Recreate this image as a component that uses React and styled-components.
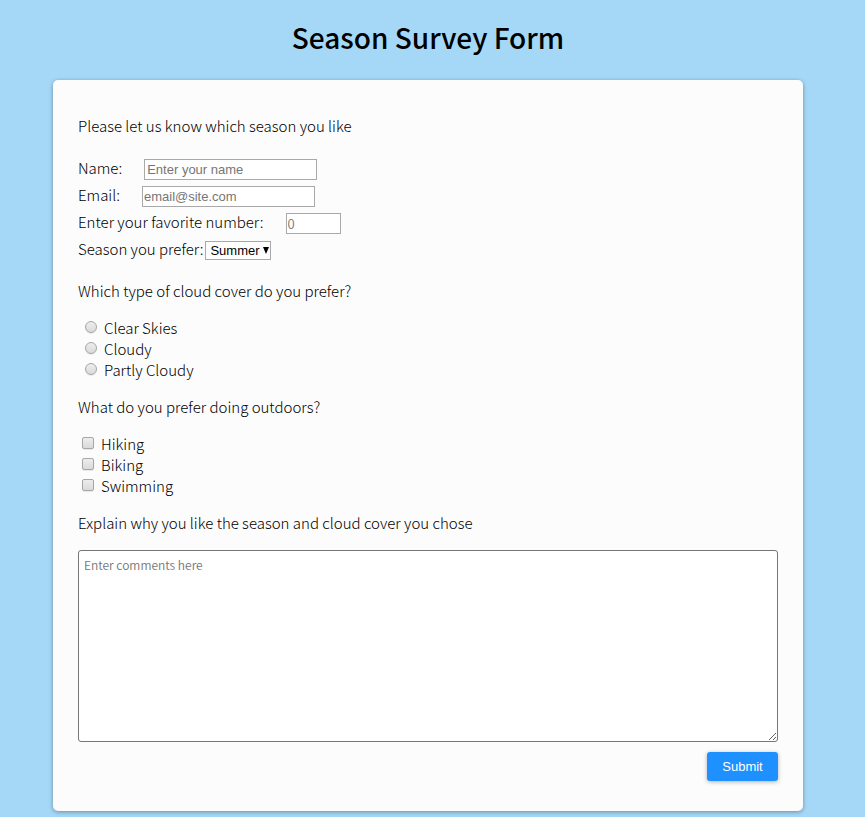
import React from "react";
import styled, { createGlobalStyle } from "styled-components";

const GlobalStyle = createGlobalStyle`
  *, *::before, *::after { box-sizing: border-box; }
  body {
    margin: 0;
    background: #a5d8f7;
    color: #000;
    font-family: "Noto Sans CJK SC", sans-serif;
    font-size: 15px;
    font-weight: 300;
    line-height: 21px;
  }
`;

const Page = styled.main`
  padding: 13px 62px 6px 53px;
`;

const Title = styled.h1`
  margin: 0 0 19px;
  font-size: 28px;
  font-weight: 500;
  line-height: 48px;
  text-align: center;
`;

const Card = styled.form`
  max-width: 750px;
  margin: 0 auto;
  padding: 35px 25px 30px;
  background: #fcfcfc;
  border-radius: 5px;
  box-shadow: 0 1px 4px rgba(0, 0, 0, 0.35);
`;

const Intro = styled.p`
  margin: 0 0 20px;
`;

const Row = styled.div`
  display: flex;
  align-items: center;
  gap: ${({ $tight }) => ($tight ? 2 : 22)}px;
  height: 27px;
`;

const RowLabel = styled.label`
  padding-bottom: 4px;
`;

const Field = styled.input`
  width: ${({ $short }) => ($short ? 55 : 173)}px;
  height: 21px;
  padding: ${({ $inset }) => ($inset ? "1px 2px" : "1px")};
  border: 1px solid #a9a9a9;
  border-radius: 0;
  background: #fff;
  color: #000;
  font: ${({ $short }) =>
    $short
      ? '350 13px/17px "Noto Sans CJK SC", sans-serif'
      : '13px/17px "Liberation Sans", Arial, sans-serif'};
  &::placeholder { color: #757575; opacity: 1; }
`;

const SelectBox = styled.span`
  display: inline-grid;
  align-items: center;
  > * { grid-area: 1 / 1; }
`;

const Select = styled.select`
  appearance: none;
  width: 66px;
  height: 19px;
  padding: 0 10px 0 4px;
  border: 1px solid #a9a9a9;
  border-radius: 0;
  background: #fff;
  color: #000;
  font: 13px/17px "Liberation Sans", Arial, sans-serif;
`;

const Arrow = styled.svg`
  justify-self: end;
  margin-right: 2px;
  pointer-events: none;
`;

const Group = styled.fieldset`
  min-width: 0;
  margin: 16px 0 0;
  padding: 0;
  border: 0;
`;

const Question = styled.legend`
  padding: 0;
  margin-bottom: 16px;
`;

const Option = styled.label`
  display: flex;
  align-items: center;
  gap: 7px;
  padding-left: ${({ $indent }) => $indent}px;
`;

const Tick = styled.input`
  appearance: none;
  flex: none;
  width: 12px;
  height: 12px;
  margin: 0 0 2px;
  border: 1px solid #a6a6a6;
  border-radius: ${({ type }) => (type === "radio" ? "50%" : "2px")};
  background: linear-gradient(#ededed, #dadada);
  box-shadow: 0 1px 1px rgba(0, 0, 0, 0.08);
  &:checked {
    background: ${({ type }) =>
      type === "radio" ? "radial-gradient(#555 0 3px, #e4e4e4 4px)" : "#666"};
  }
`;

const Prompt = styled.label`
  display: block;
  margin: 16px 0 17px;
`;

const Comments = styled.textarea`
  display: block;
  width: 100%;
  height: 192px;
  padding: 4px 5px;
  border: 1px solid #767676;
  border-radius: 3px;
  background: #fff;
  color: #000;
  font: 350 12px/19px "Noto Sans CJK SC", sans-serif;
  &::placeholder { color: #757575; opacity: 1; }
`;

const Actions = styled.div`
  display: flex;
  justify-content: flex-end;
  margin-top: 10px;
`;

const Submit = styled.button`
  min-width: 71px;
  height: 29px;
  padding: 0 14px;
  border: 0;
  border-radius: 3px;
  background: #1e90ff;
  color: #fff;
  box-shadow: 0 1px 4px rgba(0, 0, 0, 0.3);
  font: 13px "Liberation Sans", Arial, sans-serif;
  cursor: pointer;
`;

function Choices({ question, type, name, options, indent }) {
  return (
    <Group>
      <Question>{question}</Question>
      {options.map((text) => (
        <Option key={text} $indent={indent}>
          <Tick type={type} name={name} value={text} />
          {text}
        </Option>
      ))}
    </Group>
  );
}

export default function App() {
  return (
    <>
      <GlobalStyle />
      <Page>
        <Title>Season Survey Form</Title>
        <Card onSubmit={(e) => e.preventDefault()}>
          <Intro>Please let us know which season you like</Intro>
          <Row>
            <RowLabel htmlFor="name">Name:</RowLabel>
            <Field id="name" type="text" placeholder="Enter your name" $inset />
          </Row>
          <Row>
            <RowLabel htmlFor="email">Email:</RowLabel>
            <Field id="email" type="email" placeholder="email@site.com" />
          </Row>
          <Row>
            <RowLabel htmlFor="number">Enter your favorite number:</RowLabel>
            <Field id="number" type="number" placeholder="0" $short />
          </Row>
          <Row $tight>
            <RowLabel htmlFor="season">Season you prefer:</RowLabel>
            <SelectBox>
              <Select id="season" defaultValue="Summer">
                <option>Summer</option>
                <option>Fall</option>
                <option>Winter</option>
                <option>Spring</option>
              </Select>
              <Arrow width="6" height="7" viewBox="0 0 6 7" aria-hidden="true">
                <path d="M0 0h6L3 7z" />
              </Arrow>
            </SelectBox>
          </Row>
          <Choices
            question="Which type of cloud cover do you prefer?"
            type="radio"
            name="cloud"
            indent={7}
            options={["Clear Skies", "Cloudy", "Partly Cloudy"]}
          />
          <Choices
            question="What do you prefer doing outdoors?"
            type="checkbox"
            name="outdoors"
            indent={4}
            options={["Hiking", "Biking", "Swimming"]}
          />
          <Prompt htmlFor="comments">
            Explain why you like the season and cloud cover you chose
          </Prompt>
          <Comments id="comments" placeholder="Enter comments here" />
          <Actions>
            <Submit type="submit">Submit</Submit>
          </Actions>
        </Card>
      </Page>
    </>
  );
}
